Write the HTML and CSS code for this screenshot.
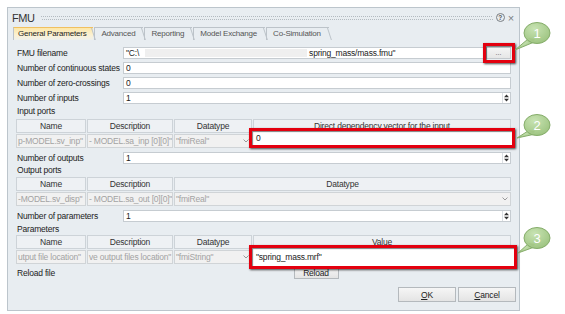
FILE: index.html
```html
<!DOCTYPE html>
<html lang="en">
<head>
    <meta charset="UTF-8">
    <meta name="viewport" content="width=device-width, initial-scale=1.0">
    <title>FMU</title>
    <link rel="stylesheet" href="styles.css">
</head>
<body>
    <div class="dialog">
        <!-- Title bar -->
        <div class="titlebar">
            <span class="title">FMU</span>
            <span class="grip"></span>
            <span class="help">?</span>
            <span class="close">&times;</span>
        </div>

        <!-- Tabs -->
        <div class="tabs">
            <span class="tab active">General Parameters</span>
            <span class="tab">Advanced</span>
            <span class="tab">Reporting</span>
            <span class="tab">Model Exchange</span>
            <span class="tab">Co-Simulation</span>
        </div>

        <div class="pane">
            <!-- FMU file -->
            <div class="row first">
                <label>FMU filename</label>
                <div class="field">
                    <span>"C:\</span><span class="masked"></span><span>spring_mass/mass.fmu"</span>
                </div>
                <span class="browse-wrap marked"><button class="browse">...</button></span>
            </div>

            <div class="row">
                <label>Number of continuous states</label>
                <div class="field">0</div>
            </div>

            <div class="row">
                <label>Number of zero-crossings</label>
                <div class="field">0</div>
            </div>

            <div class="row">
                <label>Number of inputs</label>
                <div class="field spinbox">
                    <span class="value">1</span>
                    <span class="spin"><svg width="5" height="8" viewBox="0 0 5 8"><path d="M0 3.2 L2.5 0.5 L5 3.2Z M0 4.8 L2.5 7.5 L5 4.8Z" fill="#333"/></svg></span>
                </div>
            </div>

            <!-- Input ports -->
            <div class="section">Input ports</div>
            <div class="table">
                <div class="head">Name</div>
                <div class="head">Description</div>
                <div class="head">Datatype</div>
                <div class="head">Direct dependency vector for the input</div>

                <div class="cell">p-MODEL.sv_inp"</div>
                <div class="cell">- MODEL.sa_inp [0][0]"</div>
                <div class="cell combo">"fmiReal"<svg class="arrow" width="6" height="4" viewBox="0 0 6 4"><path d="M0.5 0.5 L3 3 L5.5 0.5" fill="none" stroke="#9a9a9a"/></svg></div>
                <div class="cell edit">
                    <div class="editor editor-dep">0</div>
                </div>
            </div>

            <div class="row gap">
                <label>Number of outputs</label>
                <div class="field spinbox">
                    <span class="value">1</span>
                    <span class="spin"><svg width="5" height="8" viewBox="0 0 5 8"><path d="M0 3.2 L2.5 0.5 L5 3.2Z M0 4.8 L2.5 7.5 L5 4.8Z" fill="#333"/></svg></span>
                </div>
            </div>

            <!-- Output ports -->
            <div class="section tight">Output ports</div>
            <div class="table">
                <div class="head">Name</div>
                <div class="head">Description</div>
                <div class="head wide">Datatype</div>

                <div class="cell">-MODEL.sv_disp"</div>
                <div class="cell">- MODEL.sa_out [0][0]"</div>
                <div class="cell combo wide">"fmiReal"<svg class="arrow" width="6" height="4" viewBox="0 0 6 4"><path d="M0.5 0.5 L3 3 L5.5 0.5" fill="none" stroke="#9a9a9a"/></svg></div>
            </div>

            <div class="row gap">
                <label>Number of parameters</label>
                <div class="field spinbox">
                    <span class="value">1</span>
                    <span class="spin"><svg width="5" height="8" viewBox="0 0 5 8"><path d="M0 3.2 L2.5 0.5 L5 3.2Z M0 4.8 L2.5 7.5 L5 4.8Z" fill="#333"/></svg></span>
                </div>
            </div>

            <!-- Parameters -->
            <div class="section">Parameters</div>
            <div class="table flush">
                <div class="head">Name</div>
                <div class="head">Description</div>
                <div class="head">Datatype</div>
                <div class="head">Value</div>

                <div class="cell">utput file location"</div>
                <div class="cell">ve output files location"</div>
                <div class="cell combo">"fmiString"<svg class="arrow" width="6" height="4" viewBox="0 0 6 4"><path d="M0.5 0.5 L3 3 L5.5 0.5" fill="none" stroke="#9a9a9a"/></svg></div>
                <div class="cell edit">
                    <div class="editor editor-value">"spring_mass.mrf"</div>
                </div>
            </div>

            <div class="row reload-row">
                <label>Reload file</label>
                <div class="center"><button class="btn reload">Reload</button></div>
            </div>
        </div>

        <!-- Dialog buttons -->
        <div class="buttons">
            <button class="btn"><u>O</u>K</button>
            <button class="btn"><u>C</u>ancel</button>
        </div>
    </div>

    <!-- Numbered callouts -->
    <svg class="callouts" width="565" height="314" viewBox="0 0 565 314">
        <defs>
            <radialGradient id="bubble" cx="40%" cy="30%" r="75%">
                <stop offset="0" stop-color="#c8e3b3"/>
                <stop offset="1" stop-color="#9cc37f"/>
            </radialGradient>
        </defs>
        <g transform="translate(537 33)">
            <path d="M-9 6 L-22 17 L-4 9.5" fill="url(#bubble)" stroke="#86ad6b"/>
            <ellipse rx="13" ry="10.5" fill="url(#bubble)" stroke="#86ad6b"/>
            <path d="M-9 5 L-4 8.8 L-2 6Z" fill="#a3c786"/>
            <text y="5" text-anchor="middle" class="num">1</text>
        </g>
        <g transform="translate(537 125)">
            <path d="M-9 6 L-20 13 L-4 9.5" fill="url(#bubble)" stroke="#86ad6b"/>
            <ellipse rx="13" ry="10.5" fill="url(#bubble)" stroke="#86ad6b"/>
            <path d="M-9 5 L-4 8.8 L-2 6Z" fill="#a3c786"/>
            <text y="5" text-anchor="middle" class="num">2</text>
        </g>
        <g transform="translate(537 238)">
            <path d="M-9 6 L-19 15 L-4 9.5" fill="url(#bubble)" stroke="#86ad6b"/>
            <ellipse rx="13" ry="10.5" fill="url(#bubble)" stroke="#86ad6b"/>
            <path d="M-9 5 L-4 8.8 L-2 6Z" fill="#a3c786"/>
            <text y="5" text-anchor="middle" class="num">3</text>
        </g>
    </svg>
</body>
</html>
```

FILE: styles.css
```css
body {
    margin: 0;
    background: #fff;
    font-family: "Liberation Sans", Arial, sans-serif;
    font-size: 8.5px;
    letter-spacing: -0.2px;
    color: #222;
}
.dialog {
    box-sizing: border-box;
    width: 513px;
    height: 304px;
    margin: 7px 0 0 7px;
    border: 1px solid #bcc5cc;
    background: #e8edf1;
    display: flex;
    flex-direction: column;
}

/* title bar */
.titlebar {
    height: 19px;
    display: flex;
    align-items: center;
    padding: 0 5px 0 4px;
}
.title {
    font-size: 11px;
    letter-spacing: -0.5px;
    color: #333;
}
.grip {
    flex: 1;
    height: 4px;
    margin: 1px 3px 0 7px;
    background-image: linear-gradient(90deg, #b3bac0 50%, transparent 50%), linear-gradient(90deg, #b3bac0 50%, transparent 50%);
    background-size: 2px 1px, 2px 1px;
    background-position: 0 0, 1px 3px;
    background-repeat: repeat-x;
}
.help {
    width: 7px;
    height: 7px;
    border: 1px solid #7a7f84;
    border-radius: 50%;
    font-size: 6.5px;
    line-height: 7px;
    text-align: center;
    color: #555;
    letter-spacing: 0;
    font-weight: bold;
}
.close {
    margin-left: 3px;
    font-size: 11px;
    line-height: 10px;
    color: #7a7f84;
}

/* tabs */
.tabs {
    display: flex;
    height: 13px;
    margin-left: 5px;
    font-size: 8px;
}
.tab {
    position: relative;
    box-sizing: border-box;
    height: 13px;
    line-height: 12px;
    padding: 0 8px 0 6px;
    margin-right: 1px;
    border-top: 1px solid #bcc3c9;
    border-left: 1px solid #bcc3c9;
    color: #555;
}
.tab::after {
    content: "";
    position: absolute;
    top: 0;
    bottom: 0;
    right: 1px;
    width: 1px;
    background: #bcc3c9;
    transform: skewX(18deg);
    transform-origin: top;
}
.tab.active {
    padding: 0 7px 0 4px;
    color: #222;
    border-top: 1px solid #f0c060;
    background: linear-gradient(#fde7a6, #fbf1d4 60%, #eef0ec);
}

/* main pane */
.pane {
    display: flex;
    flex-direction: column;
    padding: 0 8px 0 9px;
}
.row {
    display: flex;
    align-items: center;
    height: 12px;
    margin-top: 3px;
}
.row.first {
    margin-top: 7px;
}
.row.gap {
    margin-top: 4px;
}
.row label {
    flex: 0 0 106px;
    white-space: nowrap;
}
.field {
    flex: 1;
    box-sizing: border-box;
    height: 12px;
    display: flex;
    align-items: center;
    padding-left: 2px;
    border: 1px solid #c6ccd1;
    background: #fff;
    white-space: nowrap;
}
.masked {
    width: 162px;
    height: 8px;
    margin: 0 2px 0 6px;
    background: #efefef;
}
.spinbox .value {
    flex: 1;
}
.spin {
    width: 7px;
    height: 10px;
    display: flex;
    align-items: center;
    justify-content: center;
    border-left: 1px solid #dadfe3;
}
.browse-wrap {
    position: relative;
    margin-left: 2px;
}
.browse {
    display: block;
    width: 25px;
    height: 12px;
    padding: 0;
    border: 1px solid #c3c8cc;
    background: linear-gradient(#f4f4f4, #e6e6e6);
    font-family: inherit;
    font-size: 7px;
    line-height: 8px;
    color: #555;
}
.marked::after {
    content: "";
    position: absolute;
    top: -4px;
    bottom: -4px;
    left: -3px;
    right: -4px;
    border: 3px solid #e3000f;
    box-shadow: 1px 1px 2px rgba(0, 0, 0, 0.7), inset 1px 1px 1px rgba(0, 0, 0, 0.5);
}

.section {
    height: 12px;
    line-height: 12px;
    margin-top: 1px;
}
.section.tight {
    margin-top: 0;
}

/* port tables */
.table {
    display: grid;
    grid-template-columns: 70px 86px 78px 1fr;
    column-gap: 1px;
    row-gap: 1px;
    margin: 2px 0 0 -1px;
}
.section.tight + .table {
    margin-top: 1px;
}
.table.flush {
    margin-top: 0;
}
.head {
    box-sizing: border-box;
    height: 14px;
    line-height: 13px;
    text-align: center;
    border: 1px solid #cdd3d8;
    background: #eef1f4;
    color: #333;
    white-space: nowrap;
    overflow: hidden;
}
.cell {
    box-sizing: border-box;
    height: 14px;
    line-height: 12px;
    padding-left: 1px;
    border: 1px solid #d0d4d7;
    background: #f1f1f1;
    color: #a3a3a3;
    white-space: nowrap;
    overflow: hidden;
}
.wide {
    grid-column: span 2;
}
.combo {
    display: flex;
    align-items: center;
    justify-content: space-between;
    padding-right: 2px;
}
.cell.edit {
    position: relative;
    overflow: visible;
    background: #fff;
}
.editor {
    position: absolute;
    display: flex;
    align-items: center;
    padding-left: 4px;
    border: 3px solid #e3000f;
    background: #fff;
    color: #222;
    box-shadow: 1px 1px 2px rgba(0, 0, 0, 0.7), inset 1px 1px 1px rgba(0, 0, 0, 0.5);
}
.editor-dep {
    top: -7px;
    bottom: -1px;
    left: -5px;
    right: -5px;
}
.editor-value {
    top: -6px;
    bottom: -6px;
    left: -5px;
    right: -7px;
}

/* buttons */
.btn {
    box-sizing: border-box;
    padding: 0;
    border: 1px solid #b4b9bd;
    background: linear-gradient(#f6f6f6, #e4e4e4);
    font-family: inherit;
    font-size: 8.5px;
    letter-spacing: -0.2px;
    color: #222;
}
.center {
    flex: 1;
    display: flex;
    justify-content: center;
}
.reload {
    width: 45px;
    height: 12px;
    line-height: 10px;
    margin-left: -2px;
}
.buttons {
    display: flex;
    justify-content: flex-end;
    gap: 2px;
    margin-top: 8px;
    padding-right: 3px;
}
.buttons .btn {
    width: 58px;
    height: 15px;
}

/* annotation layer */
.callouts {
    position: absolute;
    left: 0;
    top: 0;
    pointer-events: none;
}
.num {
    font-family: "Liberation Sans", Arial, sans-serif;
    font-size: 13px;
    fill: #fff;
}
```
